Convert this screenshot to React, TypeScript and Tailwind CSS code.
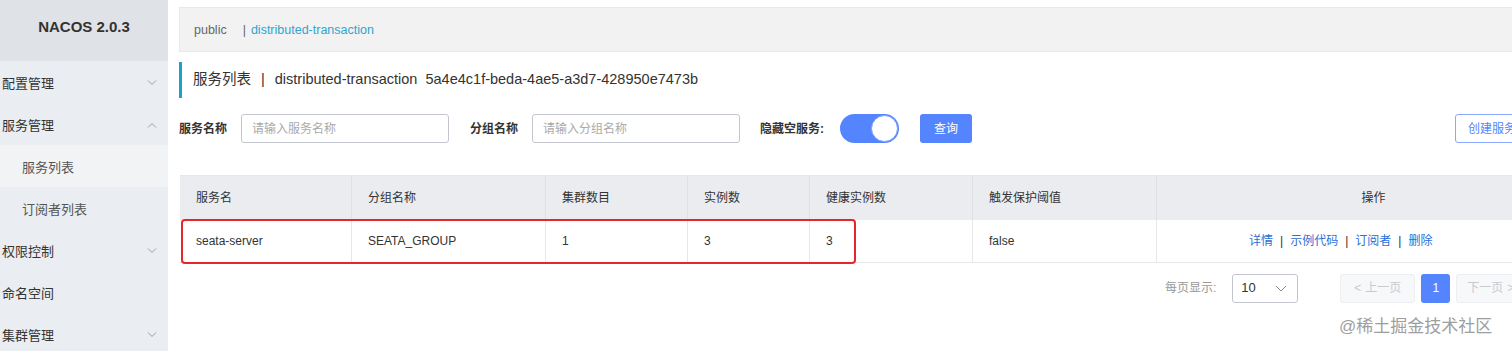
import React from 'react';

const FONT = { fontFamily: '"Liberation Sans", "Noto Sans CJK SC", sans-serif' };

function Chevron({ up = false }: { up?: boolean }) {
  return (
    <svg width="10" height="6" viewBox="0 0 10 6" className="text-[#9aa0a6]">
      <path d={up ? 'M1 5.5 L5 1.5 L9 5.5' : 'M1 0.5 L5 4.5 L9 0.5'} fill="none" stroke="currentColor" strokeWidth="1" />
    </svg>
  );
}

const menu: { label: string; chevron?: 'up' | 'down'; sub?: boolean; active?: boolean }[] = [
  { label: '配置管理', chevron: 'down' },
  { label: '服务管理', chevron: 'up' },
  { label: '服务列表', sub: true, active: true },
  { label: '订阅者列表', sub: true },
  { label: '权限控制', chevron: 'down' },
  { label: '命名空间' },
  { label: '集群管理', chevron: 'down' },
];

const columns = [
  { title: '服务名', w: 'w-[172px]' },
  { title: '分组名称', w: 'w-[194px]' },
  { title: '集群数目', w: 'w-[142px]' },
  { title: '实例数', w: 'w-[122px]' },
  { title: '健康实例数', w: 'w-[163px]' },
  { title: '触发保护阈值', w: 'w-[184px]' },
];

const row = ['seata-server', 'SEATA_GROUP', '1', '3', '3', 'false'];

export default function App() {
  return (
    <div className="w-[1512px] h-[351px] overflow-hidden bg-white flex" style={FONT}>
      {/* Sidebar */}
      <aside className="w-[168px] shrink-0 bg-[#eaedf1] flex flex-col">
        <div className="h-[61px] shrink-0 bg-[#dfe2e6] flex justify-center pt-[16px] text-[15px] font-bold text-[#333]">
          NACOS 2.0.3
        </div>
        {menu.map((m) => (
          <div
            key={m.label}
            className={`h-[42px] shrink-0 flex items-start justify-between pt-[14px] pr-[11px] text-[13px] leading-[18px] ${
              m.sub ? 'pl-[22px] text-[#555]' : 'pl-[2px] text-[#333]'
            } ${m.active ? 'bg-[#f1f3f5]' : ''}`}
          >
            <span>{m.label}</span>
            {m.chevron && (
              <span className="pt-[5px]">
                <Chevron up={m.chevron === 'up'} />
              </span>
            )}
          </div>
        ))}
      </aside>

      {/* Main */}
      <main className="w-[1440px] shrink-0 pl-[11px] pt-[7px]">
        <div className="h-[45px] bg-[#f2f2f3] border border-[#e8e9ec] flex items-center pl-[14px] pt-[1px] text-[12.5px]">
          <span className="text-[#666]">public</span>
          <span className="text-[#666] ml-[16px] mr-[5px]">|</span>
          <span className="text-[#2fa5cf]">distributed-transaction</span>
        </div>

        <div className="mt-[10px] h-[36px] border-l-[3px] border-[#1fa0cc] flex items-center pl-[11px] text-[14.5px] text-[#333]">
          <span>服务列表</span>
          <span className="mx-[10px]">|</span>
          <span>distributed-transaction&nbsp;&nbsp;5a4e4c1f-beda-4ae5-a3d7-428950e7473b</span>
        </div>

        <div className="mt-[16px] h-[29px] flex items-center text-[12px]">
          <span className="font-bold text-[#333] w-[62px]">服务名称</span>
          <div className="w-[208px] h-[29px] border border-[#c4c6cf] rounded-[3px] flex items-center pl-[10px] text-[#aaa]">
            请输入服务名称
          </div>
          <span className="font-bold text-[#333] ml-[21px] w-[62px]">分组名称</span>
          <div className="w-[208px] h-[29px] border border-[#c4c6cf] rounded-[3px] flex items-center pl-[10px] text-[#aaa]">
            请输入分组名称
          </div>
          <span className="font-bold text-[#333] ml-[20px] w-[70px]">隐藏空服务:</span>
          <div className="ml-[10px] w-[59px] h-[29px] rounded-full bg-[#5584ff] flex items-center justify-end">
            <div className="w-[27px] h-[27px] rounded-full bg-white border border-[#7a9cf5] mr-[1px]" />
          </div>
          <button className="ml-[21px] w-[52px] h-[29px] rounded-[3px] bg-[#5584ff] text-white text-[12px]">查询</button>
          <button className="ml-[483px] w-[92px] h-[29px] shrink-0 rounded-[3px] border border-[#8aa8ff] text-[#5584ff] text-[12px] bg-white text-left pl-[12px]">
            创建服务
          </button>
        </div>

        {/* Table */}
        <div className="relative mt-[32px] ml-[1px] w-[1410px] border-t border-[#e6e7eb]">
          <div className="flex h-[44px] bg-[#ebecf0] text-[12px] text-[#333]">
            {columns.map((c) => (
              <div key={c.title} className={`${c.w} shrink-0 border-r border-[#e0e1e5] flex items-center pl-[16px]`}>
                {c.title}
              </div>
            ))}
            <div className="flex-1 flex items-center justify-center">操作</div>
          </div>
          <div className="flex h-[43px] text-[12px] text-[#333] border-b border-[#e6e7eb]">
            {row.map((v, i) => (
              <div key={i} className={`${columns[i].w} shrink-0 border-r border-[#e6e7eb] flex items-center pl-[16px]`}>
                {v}
              </div>
            ))}
            <div className="flex-1 flex items-center pl-[92px] text-[#2a6fd6] text-[12px]">
              <span>详情</span>
              <span className="mx-[7px] text-[#333]">|</span>
              <span>示例代码</span>
              <span className="mx-[7px] text-[#333]">|</span>
              <span>订阅者</span>
              <span className="mx-[7px] text-[#333]">|</span>
              <span>删除</span>
            </div>
          </div>
          <div className="absolute left-[1px] top-[43px] w-[675px] h-[45px] border-2 border-[#e5262a] rounded-[4px]" />
        </div>

        {/* Pagination */}
        <div className="mt-[10px] flex items-center h-[30px] pl-[986px] text-[12px]">
          <span className="text-[#999]">每页显示:</span>
          <div className="ml-[16px] w-[66px] h-[29px] border border-[#c4c6cf] rounded-[3px] flex items-center justify-between pl-[8px] pr-[10px] text-[13px] text-[#333]">
            <span>10</span>
            <svg width="12" height="7" viewBox="0 0 12 7">
              <path d="M1 1 L6 6 L11 1" fill="none" stroke="#888" strokeWidth="1" />
            </svg>
          </div>
          <div className="ml-[42px] w-[75px] h-[29px] bg-[#f7f8fa] border border-[#eceef2] rounded-[3px] flex items-center justify-center text-[#c8cacf] gap-[4px]">
            <span>&lt;</span>
            <span>上一页</span>
          </div>
          <div className="ml-[6px] w-[29px] h-[29px] bg-[#5584ff] rounded-[3px] flex items-center justify-center text-white">1</div>
          <div className="ml-[6px] w-[75px] h-[29px] bg-[#f7f8fa] border border-[#eceef2] rounded-[3px] flex items-center pl-[10px] text-[#c8cacf] gap-[4px]">
            <span>下一页</span>
            <span>&gt;</span>
          </div>
        </div>
        <div className="mt-[11px] pl-[1160px] text-[17px] text-[#9e9e9e]">@稀土掘金技术社区</div>
      </main>
    </div>
  );
}
